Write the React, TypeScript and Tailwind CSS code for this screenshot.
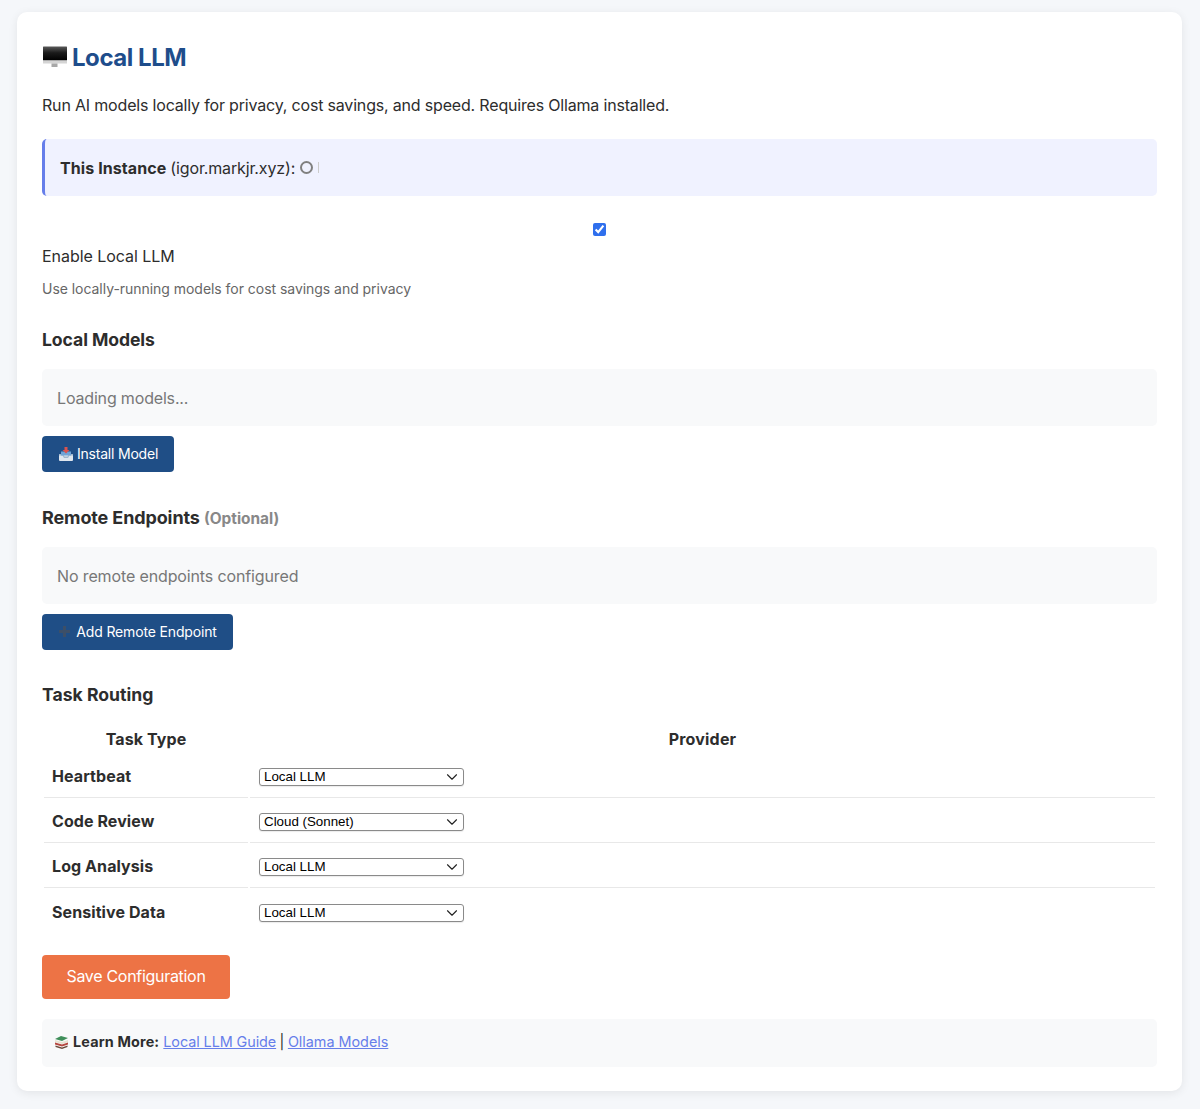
import React from "react";
import { ChevronDown } from "lucide-react";

const MonitorEmoji: React.FC = () => (
  <svg width="26" height="24" viewBox="0 0 26 24" className="inline-block align-[-3px] mr-[4px]">
    <defs>
      <linearGradient id="screen" x1="0" y1="0" x2="0" y2="1">
        <stop offset="0" stopColor="#5a5a5a" />
        <stop offset="0.45" stopColor="#1a1a1a" />
        <stop offset="1" stopColor="#000" />
      </linearGradient>
    </defs>
    <rect x="1" y="1.5" width="24" height="14" rx="0.5" fill="url(#screen)" />
    <rect x="1" y="15.5" width="24" height="3" fill="#d4d4d4" />
    <rect x="9.5" y="18.5" width="6" height="3.5" fill="#a8a8a8" />
  </svg>
);

const InboxEmoji: React.FC = () => (
  <svg width="16" height="16" viewBox="0 0 16 16" className="inline-block mr-[3px]">
    <path d="M1 8h14v6a1 1 0 0 1-1 1H2a1 1 0 0 1-1-1z" fill="#dfe6ee" />
    <path d="M1 8h4l1.5 2.5h3L11 8h4v1.5h-3.5L10 12H6L4.5 9.5H1z" fill="#9fb6cc" />
    <rect x="3" y="5.5" width="10" height="4" fill="#6fa3d6" />
    <path d="M6.5 1h3v3h2L8 7.5 4.5 4h2z" fill="#d9534f" />
  </svg>
);

const PlusEmoji: React.FC = () => (
  <svg width="13" height="13" viewBox="0 0 13 13" className="mr-[5px]">
    <path d="M5 1h3v4h4v3H8v4H5V8H1V5h4z" fill="#3c4f68" />
  </svg>
);

const BooksEmoji: React.FC = () => (
  <svg width="15" height="15" viewBox="0 0 15 15" className="inline-block mr-[4px]">
    <path d="M1 4l6-3 7 2-6 3z" fill="#3f8f5a" />
    <path d="M1 5l7 2 6-2v2l-6 2-7-2z" fill="#e8e2d0" />
    <path d="M1 7.5l7 2 6-2v2l-6 2-7-2z" fill="#b5473f" />
    <path d="M1.5 10.5l6.5 2 5.5-2V12l-5.5 2-6.5-2z" fill="#6a4a3a" />
  </svg>
);

const routes = [
  { task: "Heartbeat", provider: "Local LLM" },
  { task: "Code Review", provider: "Cloud (Sonnet)" },
  { task: "Log Analysis", provider: "Local LLM" },
  { task: "Sensitive Data", provider: "Local LLM" },
];

export default function App() {
  return (
    <div className="min-h-[1109px] bg-[#f5f7fa] pl-[17px] pr-[18px] pt-[12px] pb-[18px] font-['Inter',sans-serif] text-[#2d2d2d]">
      <div className="bg-white rounded-[10px] shadow-[0_2px_10px_rgba(0,0,0,0.08)] p-[25px] h-[1079px]">
        <h2 className="text-[24px] leading-[29px] font-bold tracking-[-0.45px] text-[#1e4d8b] mt-[6px] mb-[20px]">
          <MonitorEmoji />
          Local LLM
        </h2>
        <p className="text-[16px] leading-[26px] tracking-[-0.18px] mb-[21px]">
          Run AI models locally for privacy, cost savings, and speed. Requires Ollama installed.
        </p>

        <div className="h-[57px] bg-[#f0f2ff] border-l-[3px] border-[#667eea] rounded-[5px] pl-[15px] flex items-center text-[16px]">
          <strong className="font-bold tracking-[0.08px]">This Instance</strong>
          <span className="ml-[4px] tracking-[-0.14px]">(igor.markjr.xyz):</span>
          <span className="ml-[5px] w-[13px] h-[13px] rounded-full border-2 border-[#808080]" />
          <span className="ml-[5px] w-px h-[11px] bg-[#ccc]" />
        </div>

        <div className="mt-[27px] flex justify-center h-[13px]">
          <input type="checkbox" defaultChecked className="w-[13px] h-[13px] accent-[#2f6fed]" />
        </div>
        <label className="block mt-[7px] text-[16px] leading-[26px] tracking-[-0.05px]">Enable Local LLM</label>
        <p className="mt-[10px] text-[14px] leading-[20px] tracking-[-0.04px] text-[#666]">
          Use locally-running models for cost savings and privacy
        </p>

        <h3 className="mt-[26px] text-[17.6px] leading-[30px] font-bold tracking-[-0.08px]">Local Models</h3>
        <div className="mt-[14px] h-[57px] bg-[#f8f9fa] rounded-[5px] px-[15px] flex items-center text-[16px] tracking-[-0.17px] text-[#777]">
          Loading models...
        </div>
        <button className="mt-[10px] h-[36px] w-[132px] pb-[1px] bg-[#1f4e86] text-white text-[14px] tracking-[-0.2px] rounded-[4px] flex items-center justify-center">
          <InboxEmoji />
          Install Model
        </button>

        <h3 className="mt-[31px] text-[18px] leading-[30px] font-bold tracking-[-0.12px]">
          Remote Endpoints <span className="text-[15.4px] tracking-normal text-[#888]">(Optional)</span>
        </h3>
        <div className="mt-[13px] h-[57px] bg-[#f8f9fa] rounded-[5px] px-[15px] flex items-center text-[16px] tracking-[-0.13px] text-[#777]">
          No remote endpoints configured
        </div>
        <button className="mt-[10px] h-[36px] w-[191px] pb-[1px] bg-[#1f4e86] text-white text-[14px] tracking-[-0.15px] rounded-[4px] flex items-center justify-center">
          <PlusEmoji />
          Add Remote Endpoint
        </button>

        <h3 className="mt-[30px] text-[17.6px] leading-[30px] font-bold">Task Routing</h3>
        <table className="mt-[16px] w-full border-separate border-spacing-[2px] text-[16px]">
          <thead>
            <tr>
              <th className="w-[204px] h-[25px] pb-[2px] leading-[23px] font-bold text-center tracking-[0.1px]">Task Type</th>
              <th className="pb-[2px] leading-[23px] font-bold text-center tracking-[0.2px]">Provider</th>
            </tr>
          </thead>
          <tbody>
            {routes.map((r, i) => (
              <tr key={r.task}>
                <td className={`px-[8px] h-[43px] font-bold tracking-[0.08px] align-middle ${i < 3 ? "border-b border-[#e8e8e8]" : ""}`}>
                  {r.task}
                </td>
                <td className={`pl-[9px] pr-[8px] pt-[2px] h-[43px] align-middle ${i < 3 ? "border-b border-[#e8e8e8]" : ""}`}>
                  <div className="relative w-[205px] h-[18px]">
                    <select
                      defaultValue={r.provider}
                      className="block w-full h-full appearance-none bg-white border border-[#8a8a8a] rounded-[3px] pl-[4px] text-[13.33px] leading-[16px] text-black font-['Liberation_Sans',sans-serif] shadow-[0_1px_1px_rgba(0,0,0,0.08)]"
                    >
                      <option>Local LLM</option>
                      <option>Cloud (Sonnet)</option>
                    </select>
                    <ChevronDown className="absolute right-[3px] top-0 w-[18px] h-[18px] text-[#222] pointer-events-none" strokeWidth={1.5} />
                  </div>
                </td>
              </tr>
            ))}
          </tbody>
        </table>

        <button className="mt-[20px] block h-[44px] w-[188px] pb-[2px] bg-[#ed7345] text-white text-[16px] tracking-[-0.3px] rounded-[4px]">
          Save Configuration
        </button>

        <div className="mt-[20px] h-[48px] pb-[2px] bg-[#f8f9fa] rounded-[5px] px-[12px] flex items-center text-[14.4px] tracking-[-0.02px]">
          <BooksEmoji />
          <strong className="font-bold tracking-[0.15px]">Learn More:</strong>
          <a href="#" className="ml-[4px] text-[#667eea] underline tracking-[-0.08px]">Local LLM Guide</a>
          <span className="mx-[3.5px]">|</span>
          <a href="#" className="text-[#667eea] underline">Ollama Models</a>
        </div>
      </div>
    </div>
  );
}
